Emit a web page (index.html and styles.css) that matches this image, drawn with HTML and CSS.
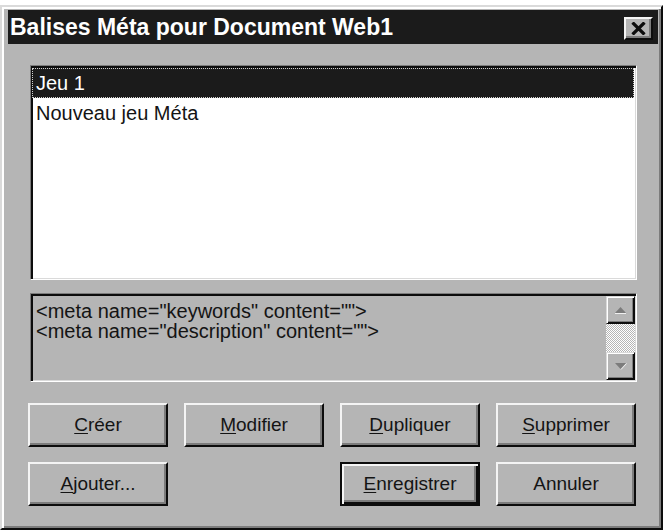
FILE: index.html
```html
<!DOCTYPE html>
<html lang="fr">
<head>
    <meta charset="UTF-8">
    <title>Balises Méta</title>
    <link rel="stylesheet" href="styles.css">
</head>
<body>

    <div class="dialog">
        <!-- Title bar -->
        <div class="titlebar">
            <span class="title">Balises Méta pour Document Web1</span>
            <div class="close-btn">
                <svg width="15" height="13" viewBox="0 0 15 13">
                    <path d="M1.5 0.5 L13.5 12.5 M13.5 0.5 L1.5 12.5" stroke="#0c0c0c" stroke-width="3.2"/>
                </svg>
            </div>
        </div>

        <div class="content">
            <!-- Meta sets list -->
            <div class="listbox">
                <div class="list-item selected">Jeu 1</div>
                <div class="list-item">Nouveau jeu Méta</div>
            </div>

            <!-- Meta tags preview -->
            <div class="meta-box">
                <div class="meta-text">
                    <div>&lt;meta name="keywords" content=""&gt;</div>
                    <div>&lt;meta name="description" content=""&gt;</div>
                </div>
                <div class="scrollbar">
                    <div class="scroll-btn">
                        <svg width="13" height="8" viewBox="0 0 13 8">
                            <path d="M1 7 L6.5 1 L12 7 Z" fill="#7c7c7c"/>
                            <path d="M1 7.5 L12 7.5" stroke="#f0f0f0" stroke-width="1"/>
                        </svg>
                    </div>
                    <div class="scroll-track"></div>
                    <div class="scroll-btn">
                        <svg width="13" height="8" viewBox="0 0 13 8">
                            <path d="M1 1 L12 1 L6.5 7 Z" fill="#7c7c7c"/>
                            <path d="M7 7.5 L12.5 1.5" stroke="#f0f0f0" stroke-width="1"/>
                        </svg>
                    </div>
                </div>
            </div>

            <!-- Buttons -->
            <div class="buttons">
                <button class="btn"><u>C</u>réer</button>
                <button class="btn"><u>M</u>odifier</button>
                <button class="btn"><u>D</u>upliquer</button>
                <button class="btn"><u>S</u>upprimer</button>
                <button class="btn"><u>A</u>jouter...</button>
                <button class="btn btn-default"><u>E</u>nregistrer</button>
                <button class="btn">Annuler</button>
            </div>
        </div>
    </div>

</body>
</html>
```

FILE: styles.css
```css
/* Base Reset */
* {
    margin: 0;
    padding: 0;
    box-sizing: border-box;
}

body {
    background-color: #ffffff;
    font-family: 'Liberation Sans', Arial, sans-serif;
    color: #141414;
}

/* Dialog window */
.dialog {
    margin-top: 5px;
    width: 663px;
    height: 525px;
    background-color: #b5b5b5;
    border: 2px solid;
    border-color: #dadada #0c0c0c #0c0c0c #dadada;
    box-shadow: inset 2px 2px #ffffff, inset -2px -2px #7c7c7c;
    padding: 3px 3px 3px 6px;
}

/* Title bar */
.titlebar {
    height: 34px;
    background-color: #1b1b1b;
    display: flex;
    justify-content: space-between;
    padding: 0 5px 0 2px;
}

.title {
    color: #ffffff;
    font-weight: bold;
    font-size: 23px;
    line-height: 34px;
}

.close-btn {
    width: 29px;
    height: 23px;
    margin-top: 7px;
    background-color: #b5b5b5;
    border: 2px solid;
    border-color: #f4f4f4 #0c0c0c #0c0c0c #f4f4f4;
    box-shadow: inset -2px -2px #7c7c7c;
    display: flex;
    justify-content: center;
    align-items: center;
}

/* Content */
.content {
    padding: 21px 21px 0 20px;
}

.listbox {
    margin-left: 2px;
    height: 215px;
    background-color: #ffffff;
    border: 1px solid;
    border-color: #7c7c7c #ffffff #ffffff #7c7c7c;
    box-shadow: inset 2px 2px #0c0c0c, inset -1px -1px #dadada;
    padding: 2px 2px 0 1px;
}

.list-item {
    height: 30px;
    line-height: 28px;
    font-size: 20px;
    padding-left: 3px;
    border: 1px solid transparent;
}

.list-item.selected {
    background-color: #1b1b1b;
    color: #ffffff;
    border: 1px dotted #d0d0d0;
}

/* Meta preview box */
.meta-box {
    margin: 13px 0 0 2px;
    height: 89px;
    display: flex;
    border: 1px solid;
    border-color: #7c7c7c #ffffff #ffffff #7c7c7c;
    box-shadow: inset 2px 2px #0c0c0c, inset -1px -1px #dadada;
    padding: 2px 1px 1px 2px;
}

.meta-text {
    flex: 1;
    font-size: 20px;
    line-height: 20px;
    padding: 5px 0 0 3px;
}

.scrollbar {
    width: 29px;
    display: flex;
    flex-direction: column;
}

.scroll-btn {
    height: 28px;
    background-color: #b5b5b5;
    border: 1px solid;
    border-color: #dadada #0c0c0c #0c0c0c #dadada;
    box-shadow: inset 1px 1px #ffffff, inset -1px -1px #0c0c0c, inset -2px -2px #7c7c7c;
    display: flex;
    justify-content: center;
    align-items: center;
}

.scroll-track {
    flex: 1;
    background-color: #b5b5b5;
    background-image: conic-gradient(#ffffff 25%, #b5b5b5 0 50%, #ffffff 0 75%, #b5b5b5 0);
    background-size: 2px 2px;
}

/* Buttons */
.buttons {
    margin-top: 21px;
    display: grid;
    grid-template-columns: repeat(4, 140px);
    column-gap: 16px;
    row-gap: 15px;
}

.btn {
    height: 44px;
    background-color: #b5b5b5;
    font-family: 'Liberation Sans', Arial, sans-serif;
    font-size: 19px;
    color: #141414;
    border: 2px solid;
    border-color: #f4f4f4 #0c0c0c #0c0c0c #f4f4f4;
    box-shadow: inset -2px -2px #7c7c7c;
}

.btn u {
    text-underline-offset: 2px;
}

.btn-default {
    grid-column: 3;
    border-color: #0c0c0c;
    box-shadow: inset 2px 2px #f4f4f4, inset -2px -2px #0c0c0c, inset -4px -4px #7c7c7c;
}
```
